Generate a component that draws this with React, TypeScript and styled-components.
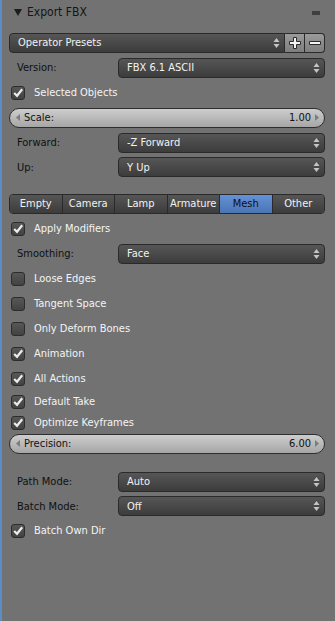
import React from "react";
import styled, { createGlobalStyle, css } from "styled-components";

const GlobalStyle = createGlobalStyle`
  html, body {
    margin: 0;
    padding: 0;
    background: #727272;
  }
  body {
    font-family: "DejaVu Sans Condensed", "DejaVu Sans", "Liberation Sans", sans-serif;
    font-stretch: condensed;
    font-size: 11px;
  }
`;

const Panel = styled.div`
  display: flex;
  flex-direction: column;
  min-height: 621px;
  box-sizing: border-box;
  border-left: 2px solid #5a8ec6;
  padding: 0 10px 0 7px;
  background: #727272;
`;

const Header = styled.div`
  height: 24px;
  display: flex;
  align-items: center;
  padding-left: 5px;
  color: #151515;
  font-size: 12px;
  position: relative;

  .tri {
    width: 0;
    height: 0;
    border-left: 4px solid transparent;
    border-right: 4px solid transparent;
    border-top: 7px solid #1c1c1c;
    margin-right: 5px;
  }
`;

const Grip = styled.div`
  position: absolute;
  right: 5px;
  top: 11px;
  width: 8px;
  height: 4px;
  background-image: radial-gradient(circle, #3c3c3c 0.7px, transparent 0.8px);
  background-size: 2px 2px;
`;

const Row = styled.div<{ $h?: number; $mt?: number }>`
  height: ${(p) => p.$h ?? 25}px;
  margin-top: ${(p) => p.$mt ?? 0}px;
  display: flex;
  align-items: center;
`;

const Label = styled.div`
  width: 101px;
  padding-left: 8px;
  color: #101010;
  white-space: nowrap;
`;

const SelectBox = styled.div<{ $flatRight?: boolean }>`
  flex: 1;
  height: 20px;
  box-sizing: border-box;
  display: flex;
  align-items: center;
  justify-content: space-between;
  padding: 0 4px 0 8px;
  border: 1px solid #2a2a2a;
  border-radius: ${(p) => (p.$flatRight ? "4px 0 0 4px" : "4px")};
  background: linear-gradient(#565656, #3c3c3c);
  color: #f2f2f2;
  white-space: nowrap;
`;

const IconButton = styled.div<{ $last?: boolean }>`
  width: 20px;
  height: 20px;
  box-sizing: border-box;
  display: flex;
  align-items: center;
  justify-content: center;
  border: 1px solid #2a2a2a;
  border-left: none;
  border-radius: ${(p) => (p.$last ? "0 4px 4px 0" : "0")};
  background: linear-gradient(#9a9a9a, #7e7e7e);
`;

const Slider = styled.div`
  flex: 1;
  height: 20px;
  box-sizing: border-box;
  display: flex;
  align-items: center;
  padding: 0 5px 0 6px;
  border: 1px solid #2e2e2e;
  border-radius: 10px;
  background: linear-gradient(#cdcdcd, #a6a6a6);
  color: #111;

  .name {
    flex: 1;
    margin-left: 4px;
  }
  .value {
    margin-right: 4px;
  }
`;

const Tabs = styled.div`
  flex: 1;
  height: 20px;
  display: flex;
  border: 1px solid #2a2a2a;
  border-radius: 4px;
  overflow: hidden;
  box-sizing: border-box;
`;

const Tab = styled.div<{ $active?: boolean }>`
  flex: 1;
  display: flex;
  align-items: center;
  justify-content: center;
  color: #f2f2f2;
  background: linear-gradient(#565656, #3c3c3c);
  & + & {
    border-left: 1px solid #2a2a2a;
  }
  ${(p) =>
    p.$active &&
    css`
      background: linear-gradient(#6592d4, #4a74b6);
      color: #101010;
    `}
`;

const CheckRow = styled.div`
  display: flex;
  align-items: center;
  padding-left: 2px;
  color: #f4f4f4;
`;

const Box = styled.div`
  width: 14px;
  height: 14px;
  box-sizing: border-box;
  border: 1px solid #2c2c2c;
  border-radius: 3px;
  background: linear-gradient(#575757, #424242);
  margin-right: 9px;
  display: flex;
  align-items: center;
  justify-content: center;
`;

const Arrows = () => (
  <svg width="7" height="12" viewBox="0 0 7 12">
    <path d="M3.5 1 L6.5 5 L0.5 5 Z" fill="#c4c4c4" />
    <path d="M0.5 7 L6.5 7 L3.5 11 Z" fill="#c4c4c4" />
  </svg>
);

const SideArrow = ({ dir }: { dir: "l" | "r" }) => (
  <svg width="4" height="7" viewBox="0 0 4 7">
    <path d={dir === "l" ? "M4 0 L0 3.5 L4 7 Z" : "M0 0 L4 3.5 L0 7 Z"} fill="#7d7d7d" />
  </svg>
);

const Check = ({ on }: { on?: boolean }) => (
  <Box>
    {on && (
      <svg width="12" height="12" viewBox="0 0 12 12">
        <path d="M2.2 6 L5 8.8 L10.2 2.2" stroke="#ececec" strokeWidth="2.2" fill="none" />
      </svg>
    )}
  </Box>
);

const Plus = () => (
  <svg width="14" height="14" viewBox="0 0 14 14">
    <path d="M5.5 1.5h3v4h4v3h-4v4h-3v-4h-4v-3h4z" fill="#f4f4f4" stroke="#2a2a2a" strokeWidth="1" />
  </svg>
);

const Minus = () => (
  <svg width="14" height="14" viewBox="0 0 14 14">
    <path d="M1.5 5.5h11v3h-11z" fill="#f4f4f4" stroke="#2a2a2a" strokeWidth="1" />
  </svg>
);

function Dropdown({ label, value, h, mt }: { label: string; value: string; h?: number; mt?: number }) {
  return (
    <Row $h={h} $mt={mt}>
      <Label>{label}</Label>
      <SelectBox>
        <span>{value}</span>
        <Arrows />
      </SelectBox>
    </Row>
  );
}

function CheckItem({ text, on, h }: { text: string; on?: boolean; h?: number }) {
  return (
    <Row $h={h}>
      <CheckRow>
        <Check on={on} />
        {text}
      </CheckRow>
    </Row>
  );
}

function NumSlider({ name, value, h }: { name: string; value: string; h?: number }) {
  return (
    <Row $h={h}>
      <Slider>
        <SideArrow dir="l" />
        <span className="name">{name}</span>
        <span className="value">{value}</span>
        <SideArrow dir="r" />
      </Slider>
    </Row>
  );
}

const tabs = ["Empty", "Camera", "Lamp", "Armature", "Mesh", "Other"];

export default function App() {
  return (
    <>
      <GlobalStyle />
      <Panel>
        <Header>
          <span className="tri" />
          Export FBX
          <Grip />
        </Header>

        <Row $mt={6}>
          <SelectBox $flatRight>
            <span>Operator Presets</span>
            <Arrows />
          </SelectBox>
          <IconButton>
            <Plus />
          </IconButton>
          <IconButton $last>
            <Minus />
          </IconButton>
        </Row>
        <Dropdown label="Version:" value="FBX 6.1 ASCII" />
        <CheckItem text="Selected Objects" on />
        <NumSlider name="Scale:" value="1.00" />
        <Dropdown label="Forward:" value="-Z Forward" />
        <Dropdown label="Up:" value="Y Up" h={24} />

        <Row $mt={12}>
          <Tabs>
            {tabs.map((t) => (
              <Tab key={t} $active={t === "Mesh"}>
                {t}
              </Tab>
            ))}
          </Tabs>
        </Row>
        <CheckItem text="Apply Modifiers" on />
        <Dropdown label="Smoothing:" value="Face" />
        <CheckItem text="Loose Edges" />
        <CheckItem text="Tangent Space" />
        <CheckItem text="Only Deform Bones" />
        <CheckItem text="Animation" on />
        <CheckItem text="All Actions" on />
        <CheckItem text="Default Take" on h={21} />
        <CheckItem text="Optimize Keyframes" on h={21} />
        <NumSlider name="Precision:" value="6.00" h={21} />

        <Dropdown label="Path Mode:" value="Auto" mt={15} />
        <Dropdown label="Batch Mode:" value="Off" h={24} />
        <CheckItem text="Batch Own Dir" on />
      </Panel>
    </>
  );
}
